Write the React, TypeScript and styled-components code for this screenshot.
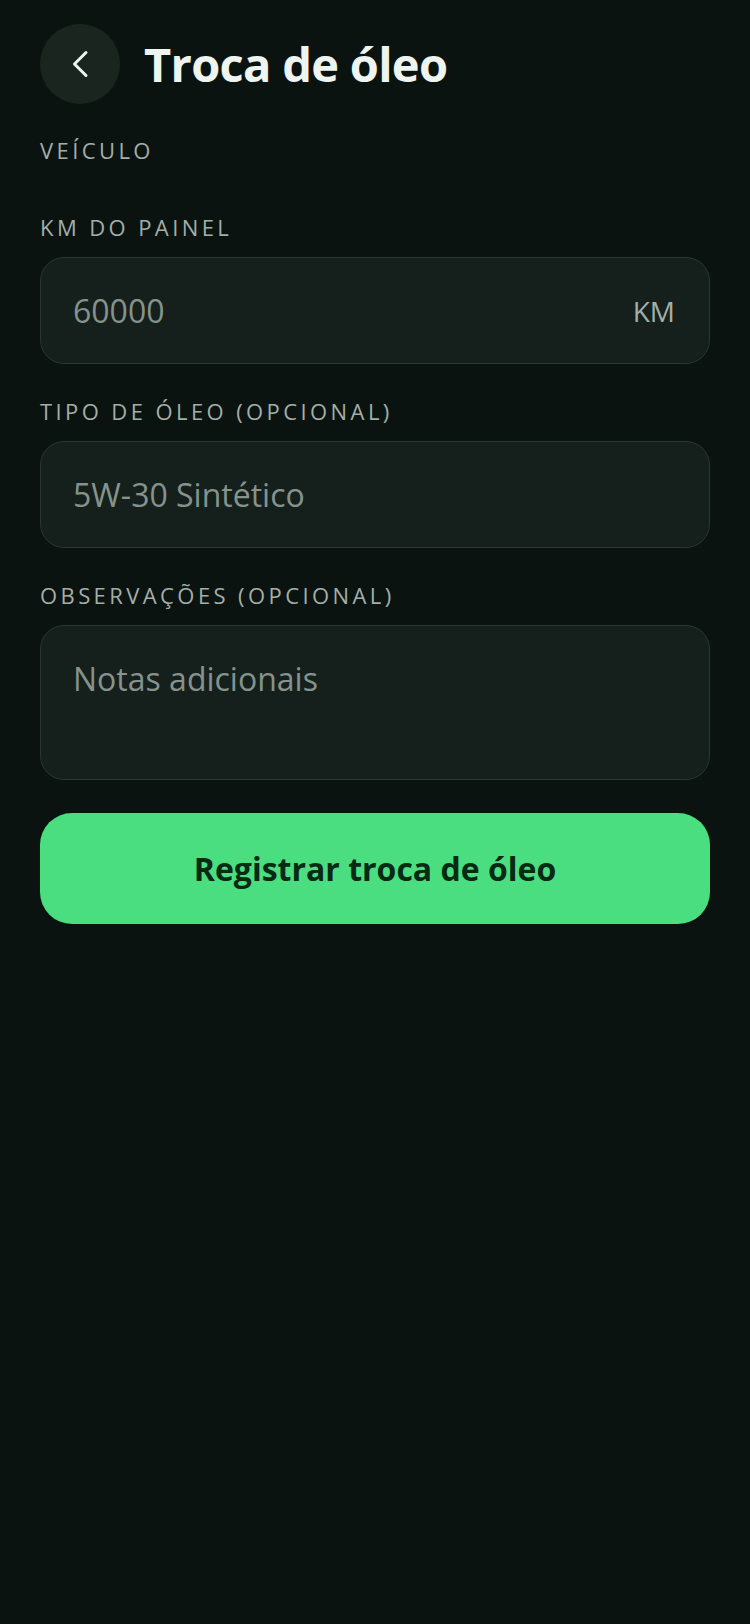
import styled, { createGlobalStyle } from 'styled-components';

const GlobalStyle = createGlobalStyle`
  * {
    box-sizing: border-box;
  }

  html,
  body {
    margin: 0;
    padding: 0;
    background: #0b1310;
  }

  body {
    font-family: 'Open Sans', 'Noto Sans', sans-serif;
  }
`;

export const Page = styled.div`
  display: flex;
  flex-direction: column;
  gap: 31px;
  min-height: 1624px;
  padding: 24px 40px;
  background: #0b1310;
`;

export const Header = styled.header`
  display: flex;
  align-items: center;
  gap: 24px;
  height: 80px;
`;

export const BackButton = styled.button`
  display: flex;
  align-items: center;
  justify-content: center;
  flex-shrink: 0;
  width: 80px;
  height: 80px;
  padding: 0;
  border: none;
  border-radius: 50%;
  background: #1a2520;
  color: #eef5f0;
  cursor: pointer;
`;

export const Title = styled.h1`
  margin: 0;
  font-weight: 700;
  font-size: 47px;
  line-height: 56px;
  letter-spacing: -0.015em;
  color: #eef5f0;
`;

export const Form = styled.form`
  display: flex;
  flex-direction: column;
  gap: 32px;
`;

export const Field = styled.div`
  display: flex;
  flex-direction: column;
  gap: 15px;
`;

export const Label = styled.label`
  font-size: 22px;
  line-height: 30px;
  letter-spacing: 0.155em;
  text-transform: uppercase;
  color: #a3aea8;
`;

export const VehicleList = styled.div`
  display: flex;
  gap: 12px;
`;

export const InputBox = styled.div<{ $tall?: boolean }>`
  display: flex;
  align-items: ${({ $tall }) => ($tall ? 'flex-start' : 'center')};
  height: ${({ $tall }) => ($tall ? '155px' : '107px')};
  padding: ${({ $tall }) => ($tall ? '31px 32px' : '0 34px 0 32px')};
  border: 1px solid #2a3631;
  border-radius: 24px;
  background: #15201c;
`;

export const Input = styled.input`
  flex: 1;
  min-width: 0;
  padding: 0;
  border: none;
  outline: none;
  background: transparent;
  font-family: inherit;
  font-size: 32px;
  color: #eef5f0;

  &::placeholder {
    color: #86928c;
  }
`;

export const TextArea = styled.textarea`
  flex: 1;
  height: 100%;
  padding: 0;
  border: none;
  outline: none;
  resize: none;
  background: transparent;
  font-family: inherit;
  font-size: 32px;
  line-height: 44px;
  color: #eef5f0;

  &::placeholder {
    color: #86928c;
  }
`;

export const Suffix = styled.span`
  font-size: 28px;
  color: #a3aea8;
`;

export const SubmitButton = styled.button`
  display: flex;
  align-items: center;
  justify-content: center;
  width: 100%;
  height: 111px;
  margin-top: 1px;
  border: none;
  border-radius: 32px;
  background: #4ade80;
  font-family: inherit;
  font-weight: 700;
  font-size: 32px;
  color: #062a14;
  cursor: pointer;
`;

const ChevronLeft = () => (
  <svg width="28" height="28" viewBox="0 0 28 28" fill="none">
    <path
      d="M20 2.5L8.5 14L20 25.5"
      stroke="currentColor"
      strokeWidth="3"
      strokeLinecap="round"
      strokeLinejoin="round"
    />
  </svg>
);

export default function App() {
  return (
    <>
      <GlobalStyle />
      <Page>
        <Header>
          <BackButton type="button" aria-label="Voltar">
            <ChevronLeft />
          </BackButton>
          <Title>Troca de óleo</Title>
        </Header>

        <Form onSubmit={(e) => e.preventDefault()}>
          <Field>
            <Label>Veículo</Label>
            <VehicleList />
          </Field>

          <Field>
            <Label htmlFor="km">KM do painel</Label>
            <InputBox>
              <Input id="km" inputMode="numeric" placeholder="60000" />
              <Suffix>KM</Suffix>
            </InputBox>
          </Field>

          <Field>
            <Label htmlFor="tipo">Tipo de óleo (opcional)</Label>
            <InputBox>
              <Input id="tipo" placeholder="5W-30 Sintético" />
            </InputBox>
          </Field>

          <Field>
            <Label htmlFor="obs">Observações (opcional)</Label>
            <InputBox $tall>
              <TextArea id="obs" placeholder="Notas adicionais" />
            </InputBox>
          </Field>

          <SubmitButton type="submit">Registrar troca de óleo</SubmitButton>
        </Form>
      </Page>
    </>
  );
}
